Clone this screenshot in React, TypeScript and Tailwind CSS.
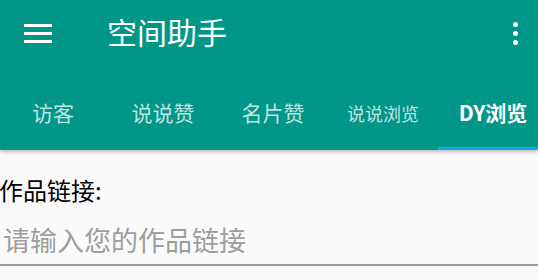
import React from "react";

const tabs = [
  { label: "访客", size: "text-[21px]" },
  { label: "说说赞", size: "text-[21px]" },
  { label: "名片赞", size: "text-[21px]" },
  { label: "说说浏览", size: "text-[18px]" },
  { label: "DY浏览", size: "text-[21px]", active: true },
];

const App = () => {
  return (
    <div
      className="w-[538px] h-[280px] overflow-hidden bg-[#fafafa] relative"
      style={{ fontFamily: '"Noto Sans CJK SC", Roboto, sans-serif' }}
    >
      <header className="bg-[#009688] shadow-[0_2px_4px_rgba(0,0,0,0.25)] relative z-10">
        <div className="h-[66px] flex items-center">
          <div className="w-[28px] ml-[24px] flex flex-col gap-[5px]">
            <div className="h-[3px] bg-white" />
            <div className="h-[3px] bg-white" />
            <div className="h-[3px] bg-white" />
          </div>
          <h1 className="ml-[55px] -mt-[4px] text-[30px] leading-none text-white">空间助手</h1>
          <div className="ml-auto mr-[20px] flex flex-col gap-[4px]">
            <div className="w-[5px] h-[5px] rounded-full bg-white" />
            <div className="w-[5px] h-[5px] rounded-full bg-white" />
            <div className="w-[5px] h-[5px] rounded-full bg-white" />
          </div>
        </div>
        <nav className="h-[84px] flex -ml-[2px] pt-[9px]">
          {tabs.map((t) => (
            <div
              key={t.label}
              className={`w-[110px] shrink-0 flex items-center justify-center relative ${t.size} ${
                t.active ? "text-white font-bold" : "text-white/75"
              }`}
            >
              <span className="leading-none">{t.label}</span>
              {t.active && <div className="absolute bottom-0 left-0 right-0 h-[3px] bg-[#1e9fe8]" />}
            </div>
          ))}
        </nav>
      </header>
      <main>
        <p className="mt-[28px] text-[24px] leading-none text-black -ml-[1px]">作品链接:</p>
        <div className="mt-[24px] border-b-2 border-[#9a9a9a] pb-[8px]">
          <span className="ml-[3px] text-[27px] leading-none text-[#9e9e9e]">请输入您的作品链接</span>
        </div>
      </main>
    </div>
  );
};

export default App;
